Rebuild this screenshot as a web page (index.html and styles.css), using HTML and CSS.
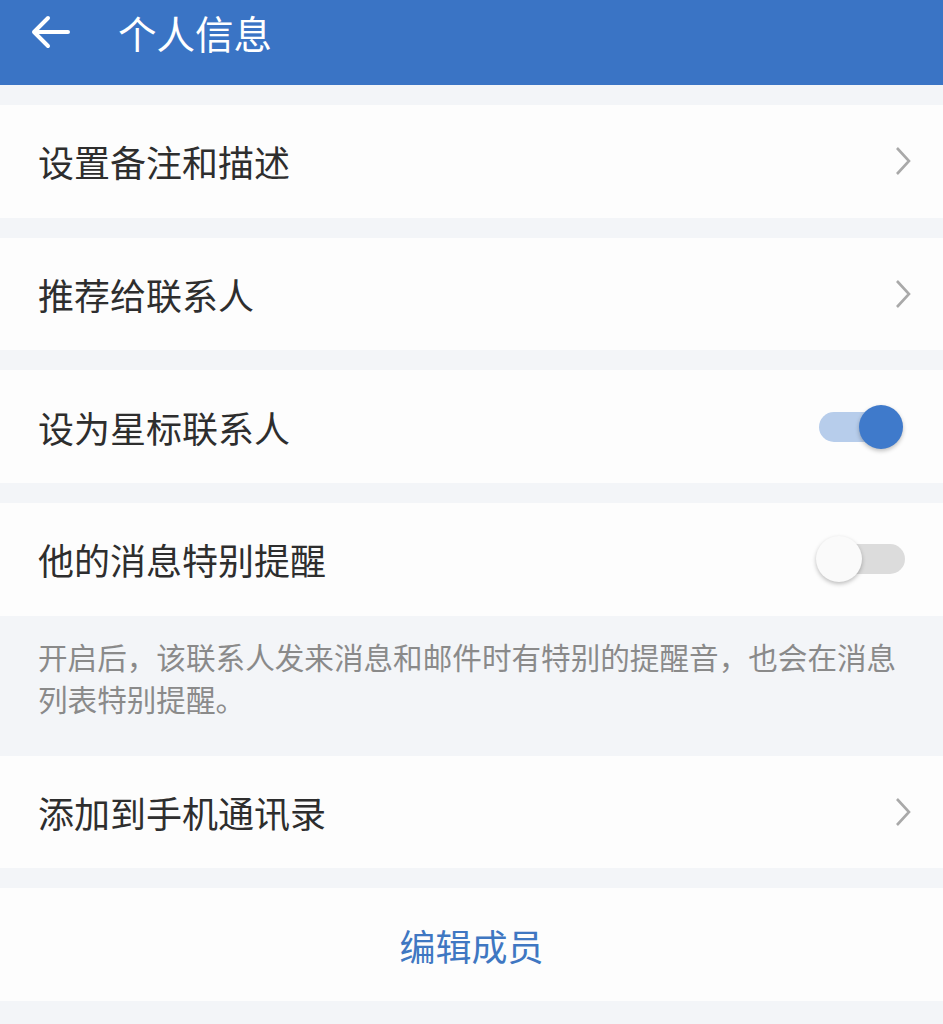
FILE: index.html
```html
<!DOCTYPE html>
<html lang="zh-CN">
<head>
    <meta charset="UTF-8">
    <meta name="viewport" content="width=device-width, initial-scale=1.0">
    <title>个人信息</title>
    <link rel="stylesheet" href="styles.css">
</head>
<body>
    <div class="topbar">
        <svg class="back" width="40" height="34" viewBox="0 0 40 34">
            <path d="M38 17H4M18 3L4 17l14 14" fill="none" stroke="#fff" stroke-width="4" stroke-linecap="round" stroke-linejoin="round"/>
        </svg>
        <span class="title">个人信息</span>
    </div>

    <div class="list">
        <div class="row">
            <span>设置备注和描述</span>
            <svg class="arrow" width="16" height="30" viewBox="0 0 16 30"><path d="M2 2l12 13L2 28" fill="none" stroke="#a9a9a9" stroke-width="2.6"/></svg>
        </div>
        <div class="row">
            <span>推荐给联系人</span>
            <svg class="arrow" width="16" height="30" viewBox="0 0 16 30"><path d="M2 2l12 13L2 28" fill="none" stroke="#a9a9a9" stroke-width="2.6"/></svg>
        </div>
        <div class="row">
            <span>设为星标联系人</span>
            <div class="switch on"><div class="knob"></div></div>
        </div>
        <div class="row">
            <span>他的消息特别提醒</span>
            <div class="switch"><div class="knob"></div></div>
        </div>
        <div class="note">开启后，该联系人发来消息和邮件时有特别的提醒音，也会在消息列表特别提醒。</div>
        <div class="row">
            <span>添加到手机通讯录</span>
            <svg class="arrow" width="16" height="30" viewBox="0 0 16 30"><path d="M2 2l12 13L2 28" fill="none" stroke="#a9a9a9" stroke-width="2.6"/></svg>
        </div>
        <div class="row action">编辑成员</div>
    </div>
</body>
</html>
```

FILE: styles.css
```css
body{
    margin: 0;
    background-color: #f3f5f8;
    font-family: "Noto Sans CJK SC", "Noto Sans", sans-serif;
}
.topbar{
    height: 85px;
    box-sizing: border-box;
    padding: 8px 0 0 30px;
    display: flex;
    align-items: flex-start;
    background-color: #3a74c5;
    color: #fff;
}
.back{
    margin-top: 7px;
}
.title{
    margin-left: 48px;
    font-size: 38.5px;
    line-height: 48px;
}
.list{
    padding-bottom: 24px;
}
.row{
    height: 112.7px;
    margin-top: 20px;
    box-sizing: border-box;
    padding: 0 32px 0 38px;
    display: flex;
    align-items: center;
    justify-content: space-between;
    background-color: #fdfdfd;
    font-size: 36px;
    color: #2e2e2e;
}
.note, .note + .row{
    margin-top: 0;
}
.note{
    height: 140px;
    box-sizing: border-box;
    padding: 20px 38px 0 38px;
    font-size: 29.6px;
    line-height: 42px;
    color: #8a8a8a;
    background-color: #f3f5f8;
}
.switch{
    position: relative;
    width: 85px;
    height: 30px;
    margin-right: 6px;
    border-radius: 15px;
    background-color: #dcdcdc;
}
.switch .knob{
    position: absolute;
    top: -8px;
    left: -4px;
    width: 46px;
    height: 46px;
    border-radius: 50%;
    background-color: #fafafa;
    box-shadow: 0 2px 4px rgba(0,0,0,0.25);
}
.switch.on{
    width: 80px;
    margin-right: 12px;
    background-color: #b7cdeb;
}
.switch.on .knob{
    left: 40px;
    top: -7px;
    width: 44px;
    height: 44px;
    background-color: #3f7acb;
}
.action{
    justify-content: center;
    padding: 0;
    color: #3f77c2;
}
```
